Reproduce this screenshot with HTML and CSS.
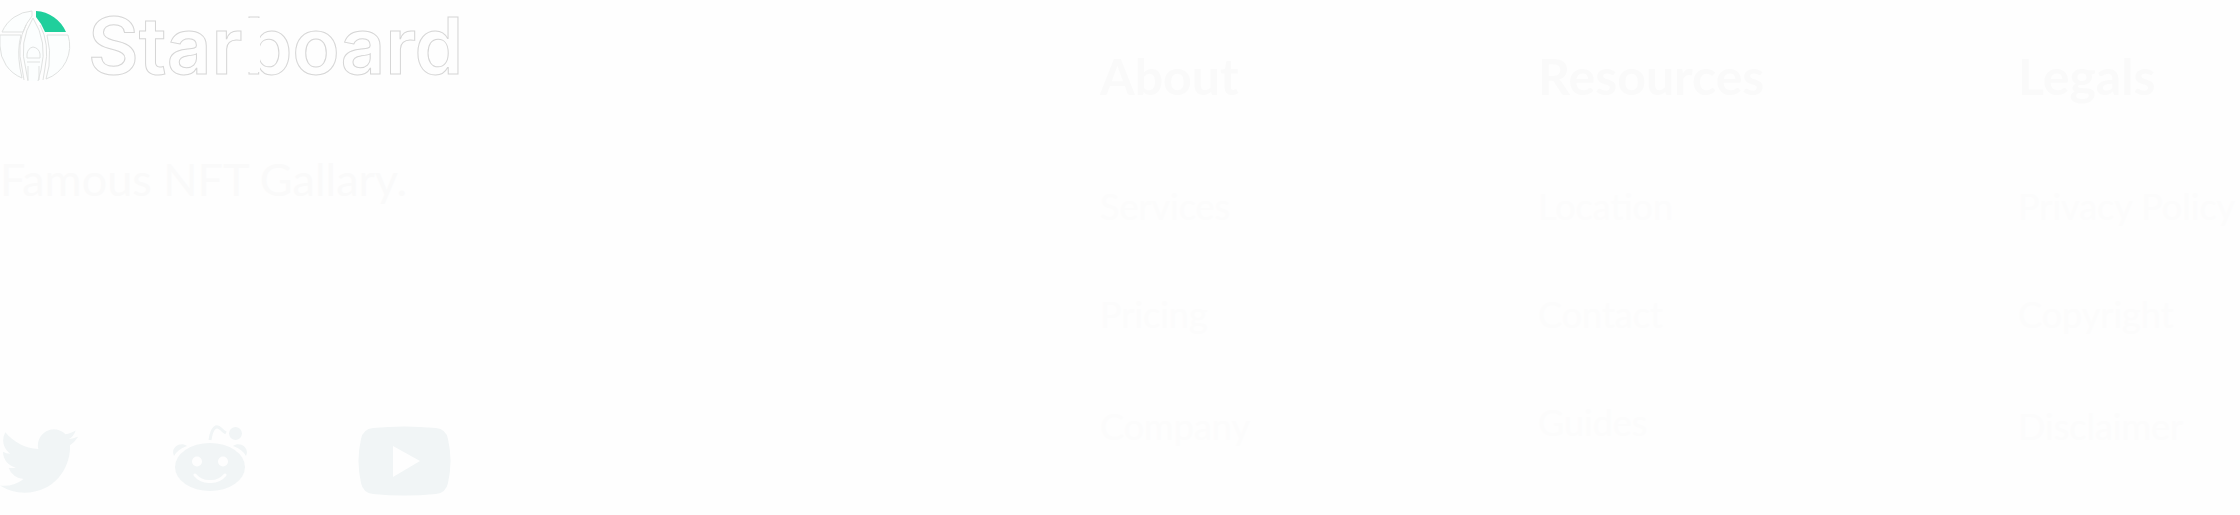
FILE: index.html
```html
<!DOCTYPE html>
<html lang="en">
<head>
<meta charset="utf-8">
<title>Starboard</title>
<link rel="stylesheet" href="styles.css">
</head>
<body>
<footer class="footer">
  <section class="brand">
    <a class="logo" href="#">
      <svg class="logo-mark" viewBox="0 10 72 72" aria-hidden="true">
        <g fill="#fcfefe" stroke="#e0e2e1" stroke-width="1">
          <path d="M2 32A35 35 0 0 1 32 11V16Q26 23 23 32Z"/>
          <path d="M0 35H21Q17 50 20 68L22 78A35 35 0 0 1 0 46Z"/>
          <path d="M47 35H68A35 35 0 0 1 46 79L49 66Q51 50 47 35Z"/>
          <path d="M28 81L26 70Q18 42 33 18Q48 42 41 70L38 81"/>
          <path d="M24 80L22 68Q16 44 26 25M43 80L45 68Q50 44 40 25" fill="none"/>
          <path d="M27 58V54Q28 48 33 47Q39 48 40 54V58ZM27 62H40M28 66V80M39 66V80"/>
        </g>
        <path d="M36 11A35 35 0 0 1 66 32H45Q42 24 36 17Z" fill="#20cf9c"/>
      </svg>
      <span class="wordmark">Star<span class="cut">b</span>oard</span>
    </a>
    <p class="tagline">Famous NFT Gallary.</p>
    <div class="social">
      <a href="#" aria-label="Twitter"><svg class="twitter" viewBox="0 2 24 20"><path d="M23.953 4.57a10 10 0 01-2.825.775 4.958 4.958 0 002.163-2.723c-.951.555-2.005.959-3.127 1.184a4.92 4.92 0 00-8.384 4.482C7.69 8.095 4.067 6.13 1.64 3.162a4.822 4.822 0 00-.666 2.475c0 1.71.87 3.213 2.188 4.096a4.904 4.904 0 01-2.228-.616v.06a4.923 4.923 0 003.946 4.827 4.996 4.996 0 01-2.212.085 4.936 4.936 0 004.604 3.417 9.867 9.867 0 01-6.102 2.105c-.39 0-.779-.023-1.17-.067a13.995 13.995 0 007.557 2.209c9.053 0 13.998-7.496 13.998-13.985 0-.21 0-.42-.015-.63A9.935 9.935 0 0024 4.59z"/></svg></a>
      <a href="#" aria-label="Reddit"><svg class="reddit" viewBox="173 425 74 67"><ellipse cx="210" cy="467" rx="35" ry="24"/><path d="M174 456C170 448 180 441 187 446Q178 449 174 456ZM246 456C250 448 240 441 233 446Q242 449 246 456Z"/><circle cx="235.5" cy="433.5" r="6.5"/><path class="antenna" d="M210 440C212 426 217 425 221 429Q224 432 226 433"/><circle class="hole" cx="197" cy="461.500" r="5"/><circle class="hole" cx="223" cy="461.500" r="5"/><path class="smile" d="M195 475Q201 482 210 481.500Q219 482 225 475"/></svg></a>
      <a href="#" aria-label="YouTube"><svg class="youtube" viewBox="0 0 93 70"><path d="M15 2Q46-1 78 2Q88 3 90 13Q95 35 90 57Q88 67 78 68Q46 71 15 68Q5 67 3 57Q-2 35 3 13Q5 3 15 2ZM35 20V51L62 35Z" fill-rule="evenodd"/></svg></a>
    </div>
  </section>
  <nav class="column column-wide" aria-labelledby="about">
    <h2 id="about">About</h2>
    <ul><li><a href="#">Services</a></li><li><a href="#">Pricing</a></li><li><a href="#">Company</a></li></ul>
  </nav>
  <nav class="column" aria-labelledby="resources">
    <h2 id="resources">Resources</h2>
    <ul><li><a href="#">Location</a></li><li><a href="#">Contact</a></li><li><a href="#">Guides</a></li></ul>
  </nav>
  <nav class="column column-wide" aria-labelledby="legals">
    <h2 id="legals">Legals</h2>
    <ul><li><a href="#">Privacy Policy</a></li><li><a href="#">Copyright</a></li><li><a href="#">Disclaimer</a></li></ul>
  </nav>
</footer>
</body>
</html>
```
FILE: styles.css
```css
* { box-sizing: border-box; }
body {
  margin: 0;
  background: #fefefe;
  color: #fafafa;
  font-family: Lato, "Noto Sans", sans-serif;
}
a { color: inherit; text-decoration: none; }
svg { display: block; }
.footer {
  display: grid;
  grid-template-columns: minmax(0, 1100fr) minmax(0, 438fr) minmax(0, 480fr) minmax(0, 222fr);
}
.logo { display: flex; align-items: center; gap: 16px; }
.logo-mark { width: 72px; height: 72px; flex: none; }
.wordmark {
  font: 600 78px/92px Inter, sans-serif;
  color: #fefefe;
  -webkit-text-stroke: 1px #d6d6d6;
}
.cut { position: relative; }
.cut::after {
  content: "";
  position: absolute;
  left: 0;
  top: 20px;
  width: 16px;
  height: 54px;
  background: #fefefe;
}
.tagline { margin: 57px 0 0; font-size: 45px; line-height: 60px; }
.social { display: flex; align-items: center; margin-top: 216px; }
.social svg { fill: #f1f5f6; }
.twitter { width: 78px; height: 66px; }
.reddit { width: 74px; height: 67px; margin-left: 95px; margin-bottom: 4px; }
.youtube { width: 93px; height: 70px; margin-left: 111px; }
.social .hole { fill: #fefefe; }
.social .antenna { fill: none; stroke: #f1f5f6; stroke-width: 3; }
.social .smile { fill: none; stroke: #fefefe; stroke-width: 3; stroke-linecap: round; }
.column { padding-top: 46px; white-space: nowrap; }
.column h2 { margin: 0; font-size: 50px; line-height: 60px; font-weight: 700; }
.column ul {
  display: flex;
  flex-direction: column;
  gap: 58px;
  margin: 75px 0 0;
  padding: 0;
  list-style: none;
  font-size: 36px;
  line-height: 50px;
  color: #fcfcfc;
}
.column-wide li:last-child { padding-top: 4px; }
```
